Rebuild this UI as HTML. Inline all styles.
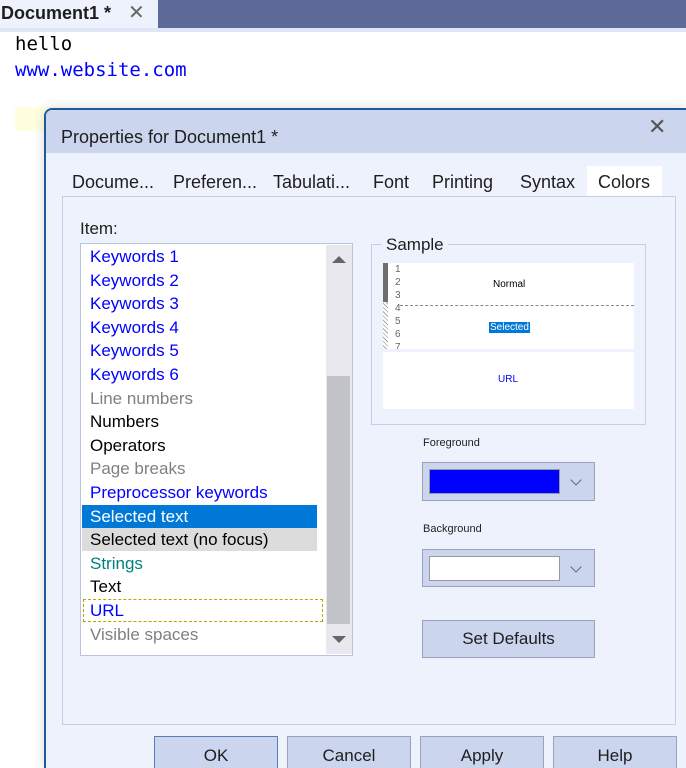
<!DOCTYPE html>
<html style="width:686px;height:768px;overflow:hidden"><head><style>
*{box-sizing:border-box;margin:0;padding:0}
body{width:686px;height:768px;overflow:hidden;background:#fff;position:relative;font-family:"Liberation Sans",sans-serif}
.abs{position:absolute}
.tabbar{left:0;top:0;width:686px;height:28px;background:#5d6b99}
.doctab{left:0;top:0;width:158px;height:28px;background:#eef2fc;font-weight:bold;font-size:18px;line-height:26px;padding-left:1px;color:#1e1e1e}
.line{left:0;top:28px;width:686px;height:4px;background:#dfe6f7}
.code{left:15px;font-family:"DejaVu Sans Mono","Liberation Mono",monospace;font-size:19px}
.dlg{left:44px;top:108px;width:642px;height:660px;background:#eef2fc;border:2px solid #1e5a9a;border-right:none;border-bottom:none;border-radius:8px 0 0 0;box-shadow:0 0 12px rgba(0,0,0,.15)}
.title{left:46px;top:110px;width:640px;height:43px;background:#cbd5ee;border-radius:6px 0 0 0}
.tab{top:172px;font-size:18px;color:#1e1e1e;height:24px}
.panel{left:62px;top:196px;width:614px;height:529px;border:1px solid #c5cfea;background:#eef2fc}
.list{left:80px;top:243px;width:273px;height:413px;background:#fff;border:1px solid #b9c3de}
.it{position:absolute;left:9px;font-size:17px;line-height:22px}
.btn{background:#cbd5ee;border:1px solid #9aa3b8;font-size:17px;text-align:center;color:#1e1e1e}
.bb{border-bottom:none;height:32px;line-height:38px}
.chev{position:absolute;width:8px;height:8px;border-right:1.5px solid #666;border-bottom:1.5px solid #666;transform:rotate(45deg)}
</style></head><body>
<div class="abs tabbar"></div>
<div class="abs doctab">Document1 * <span style="font-weight:normal;color:#666;margin-left:12px;font-size:20px">✕</span></div>
<div class="abs line"></div>
<div class="abs code" style="top:33px">hello</div>
<div class="abs code" style="top:59px;color:#0000ff">www.website.com</div>
<div class="abs" style="left:15px;top:107px;width:40px;height:24px;background:#ffffe0"></div>
<div class="abs dlg"></div>
<div class="abs title"></div>
<div class="abs" style="left:61px;top:127px;font-size:18px;color:#1e1e1e">Properties for Document1 *</div>
<div class="abs" style="left:648px;top:114px;font-size:22px;color:#555">✕</div>
<div class="abs" style="left:587px;top:166px;width:75px;height:31px;background:#fff"></div>
<div class="abs tab" style="left:72px">Docume...</div>
<div class="abs tab" style="left:173px">Preferen...</div>
<div class="abs tab" style="left:273px">Tabulati...</div>
<div class="abs tab" style="left:373px">Font</div>
<div class="abs tab" style="left:432px">Printing</div>
<div class="abs tab" style="left:520px">Syntax</div>
<div class="abs tab" style="left:598px">Colors</div>
<div class="abs panel"></div>
<div class="abs" style="left:80px;top:219px;font-size:17px;color:#1e1e1e">Item:</div>
<div class="abs list">
<div class="abs" style="left:1px;top:261px;width:235px;height:23px;background:#0078d7"></div>
<div class="abs" style="left:1px;top:284px;width:235px;height:23px;background:#dcdcdc"></div>
<div class="abs" style="left:2px;top:355px;width:240px;height:23px;border:1px dashed #b9a800"></div>
<div class="it" style="top:2px;color:#0000ff">Keywords 1</div>
<div class="it" style="top:26px;color:#0000ff">Keywords 2</div>
<div class="it" style="top:49px;color:#0000ff">Keywords 3</div>
<div class="it" style="top:73px;color:#0000ff">Keywords 4</div>
<div class="it" style="top:96px;color:#0000ff">Keywords 5</div>
<div class="it" style="top:120px;color:#0000ff">Keywords 6</div>
<div class="it" style="top:144px;color:#808080">Line numbers</div>
<div class="it" style="top:167px;color:#000">Numbers</div>
<div class="it" style="top:191px;color:#000">Operators</div>
<div class="it" style="top:214px;color:#808080">Page breaks</div>
<div class="it" style="top:238px;color:#0000ff">Preprocessor keywords</div>
<div class="it" style="top:262px;color:#fff">Selected text</div>
<div class="it" style="top:285px;color:#000">Selected text (no focus)</div>
<div class="it" style="top:309px;color:#008080">Strings</div>
<div class="it" style="top:332px;color:#000">Text</div>
<div class="it" style="top:356px;color:#0000ff">URL</div>
<div class="it" style="top:380px;color:#808080">Visible spaces</div>
<div class="abs" style="left:245px;top:1px;width:26px;height:409px;background:#e8e8ee"></div>
<div class="abs" style="left:246px;top:132px;width:23px;height:248px;background:#c2c3c9"></div>
<div class="abs" style="left:251px;top:12px;width:0;height:0;border-left:7px solid transparent;border-right:7px solid transparent;border-bottom:7px solid #666"></div>
<div class="abs" style="left:251px;top:392px;width:0;height:0;border-left:7px solid transparent;border-right:7px solid transparent;border-top:7px solid #666"></div>
</div>
<div class="abs" style="left:371px;top:244px;width:275px;height:181px;border:1px solid #c5cfea"></div>
<div class="abs" style="left:382px;top:235px;background:#eef2fc;padding:0 4px;font-size:17px;color:#1e1e1e">Sample</div>
<div class="abs" style="left:383px;top:263px;width:251px;height:86px;background:#fff"></div>
<div class="abs" style="left:383px;top:263px;width:5px;height:39px;background:#6e6e6e"></div>
<div class="abs" style="left:383px;top:302px;width:5px;height:47px;background:repeating-linear-gradient(45deg,#fff 0 2px,#aaa 2px 3px)"></div>
<div class="abs" style="left:395px;top:263px;height:86px;overflow:hidden;font-size:10px;line-height:13px;color:#666">1<br>2<br>3<br>4<br>5<br>6<br>7</div>
<div class="abs" style="left:400px;top:305px;width:234px;border-top:1px dashed #888"></div>
<div class="abs" style="left:493px;top:279px;font-size:10px;color:#000">Normal</div>
<div class="abs" style="left:489px;top:322px;font-size:10px;color:#fff;background:#0078d7;padding:0 1px">Selected</div>
<div class="abs" style="left:383px;top:352px;width:251px;height:57px;background:#fff"></div>
<div class="abs" style="left:498px;top:374px;font-size:10px;color:#0000ff">URL</div>
<div class="abs" style="left:423px;top:437px;font-size:11px;color:#1e1e1e">Foreground</div>
<div class="abs btn" style="left:422px;top:462px;width:173px;height:39px"></div>
<div class="abs" style="left:429px;top:469px;width:131px;height:25px;background:#0000ff;border:1px solid #999"></div>
<div class="chev" style="left:572px;top:476px"></div>
<div class="abs" style="left:423px;top:523px;font-size:11px;color:#1e1e1e">Background</div>
<div class="abs btn" style="left:422px;top:549px;width:173px;height:38px"></div>
<div class="abs" style="left:429px;top:556px;width:131px;height:25px;background:#fff;border:1px solid #999"></div>
<div class="chev" style="left:572px;top:563px"></div>
<div class="abs btn" style="left:422px;top:620px;width:173px;height:38px;line-height:36px">Set Defaults</div>
<div class="abs btn bb" style="left:154px;top:736px;width:124px;border-color:#5a7fb8">OK</div>
<div class="abs btn bb" style="left:287px;top:736px;width:124px">Cancel</div>
<div class="abs btn bb" style="left:420px;top:736px;width:124px">Apply</div>
<div class="abs btn bb" style="left:553px;top:736px;width:124px">Help</div>
</body></html>
